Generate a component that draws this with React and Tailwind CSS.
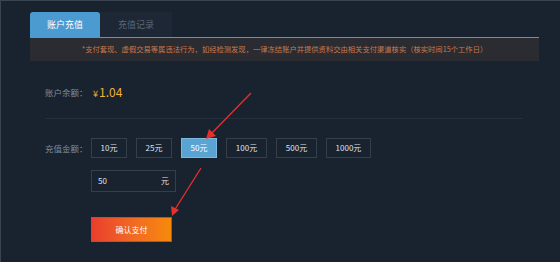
const AMOUNTS = [
  { label: "10元", w: "w-[36px]" },
  { label: "25元", w: "w-[36px]" },
  { label: "50元", w: "w-[36px]", active: true },
  { label: "100元", w: "w-[41px]" },
  { label: "500元", w: "w-[41px]" },
  { label: "1000元", w: "w-[45px]" },
];

const font = { fontFamily: '"Noto Sans CJK SC", "Noto Sans", sans-serif' };

export default function App() {
  return (
    <div
      className="relative h-[262px] w-[560px] overflow-hidden border-l border-t border-[#3a4350] bg-[#19222f]"
      style={font}
    >
      <div className="w-[538px] pl-[29px] pt-[11px]">
        <div className="flex h-[25px]">
          <div className="flex w-[70px] items-center justify-center rounded-t-[3px] bg-[#4b9bd0] text-[9px] text-white">
            账户充值
          </div>
          <div className="flex w-[72px] items-center justify-center bg-[#1d2735] text-[9px] text-[#5c6776]">
            充值记录
          </div>
        </div>
        <div className="h-px bg-[#4b9bd0]" />
        <div className="flex h-[23px] items-center justify-center bg-[#2a2c31] text-[7.3px] text-[#c97a4d]">
          *支付套现、虚假交易等属违法行为，如经检测发现，一律冻结账户并提供资料交由相关支付渠道核实（核实时间15个工作日）
        </div>
      </div>

      <div className="pl-[44px]">
        <div className="mt-[21px] flex h-[20px] items-center">
          <span className="w-[48px] text-[8.5px] text-[#808b99]">账户余额：</span>
          <span className="flex items-baseline text-[#f2b233]">
            <span className="text-[9px]">¥</span>
            <span className="ml-[1px] text-[12px]">1.04</span>
          </span>
        </div>

        <div className="mt-[16px] h-px w-[478px] bg-[#242e3c]" />

        <div className="mt-[19px] flex items-center">
          <span className="w-[46px] text-[8.5px] text-[#808b99]">充值金额：</span>
          <div className="flex gap-[9px]">
            {AMOUNTS.map((a) => (
              <div
                key={a.label}
                className={`flex h-[20px] items-center justify-center border text-[8px] ${a.w} ${
                  a.active
                    ? "border-[#7cb8e0] bg-[#5aa4d4] text-white"
                    : "border-[#353f4c] text-[#dfe4ea]"
                }`}
              >
                {a.label}
              </div>
            ))}
          </div>
        </div>

        <div className="ml-[46px] mt-[12px] flex h-[22px] w-[85px] items-center justify-between border border-[#353f4c] px-[6px] text-[8px] text-[#dfe4ea]">
          <span>50</span>
          <span>元</span>
        </div>

        <div className="ml-[46px] mt-[25px] flex h-[25px] w-[81px] items-center justify-center border border-[#d9442a] bg-gradient-to-r from-[#e93d2d] to-[#f78a08] text-[8px] text-white">
          确认支付
        </div>
      </div>

      <svg
        className="pointer-events-none absolute left-0 top-0"
        width="560"
        height="262"
        viewBox="0 0 560 262"
      >
        <line x1="250" y1="92" x2="209" y2="134" stroke="#e8302a" strokeWidth="1.3" />
        <polygon points="205,138 208,128 215,135" fill="#e8302a" />
        <line x1="200" y1="167" x2="173" y2="210" stroke="#e8302a" strokeWidth="1.3" />
        <polygon points="171,215 170,205 178,209" fill="#e8302a" />
      </svg>
    </div>
  );
}
